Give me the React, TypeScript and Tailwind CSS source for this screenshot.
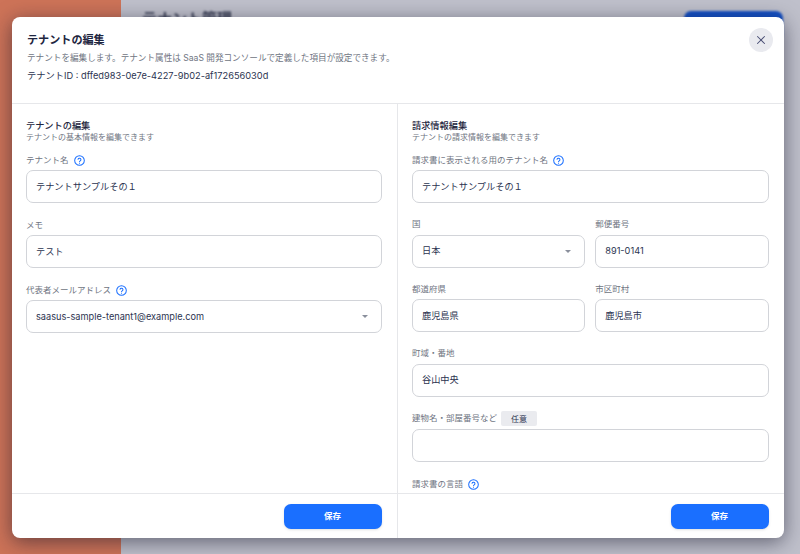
import { X } from 'lucide-react';
import type { ReactNode } from 'react';

const fontStack = '[font-family:Inter,"Noto_Sans_CJK_JP",sans-serif]';

function HelpIcon() {
  return (
    <svg width="11" height="11" viewBox="0 0 24 24" fill="none" stroke="#1a6fff" strokeWidth="2.2" strokeLinecap="round" strokeLinejoin="round">
      <circle cx="12" cy="12" r="10.5" />
      <path d="M8.8 9.2a3.3 3.3 0 0 1 6.4 1c0 2.2-3.2 2.6-3.2 4.6" />
      <path d="M12 18.2h.01" />
    </svg>
  );
}

function Label({ text, help, children }: { text: string; help?: boolean; children?: ReactNode }) {
  return (
    <div className="flex min-h-[14px] items-center gap-[5px] text-[8.5px] leading-none text-[#6f7582]">
      <span>{text}</span>
      {help && <HelpIcon />}
      {children}
    </div>
  );
}

function Field({ label, value, help, select, className, children }: {
  label: string;
  value?: string;
  help?: boolean;
  select?: boolean;
  className?: string;
  children?: ReactNode;
}) {
  return (
    <div className={className}>
      <Label text={label} help={help}>{children}</Label>
      <div className="mt-[3px] flex h-[33px] items-center justify-between rounded-[7px] border border-[#d2d4d9] pl-[9px] pr-[13px] text-[9.2px] text-[#2b3350]">
        <span>{value}</span>
        {select && <span className="h-0 w-0 border-x-[3px] border-t-[3px] border-x-transparent border-t-[#8a8f9c]" />}
      </div>
    </div>
  );
}

function PanelHead({ title, sub }: { title: string; sub: string }) {
  return (
    <div className="mb-[10px]">
      <div className="text-[9.2px] font-medium leading-[13px] text-[#1e2640]">{title}</div>
      <div className="text-[8px] leading-[11px] text-[#6f7582]">{sub}</div>
    </div>
  );
}

function Footer() {
  return (
    <div className="flex h-[45px] shrink-0 items-start justify-end border-t border-[#e6e7ea] pr-[15.5px] pt-[10px]">
      <button className="h-[25px] w-[98px] rounded-[7px] bg-[#1a6fff] text-[8.5px] font-bold text-white shadow-sm">保存</button>
    </div>
  );
}

export default function App() {
  return (
    <div className={`relative flex h-[554px] w-[800px] overflow-hidden bg-[#bfc0cb] ${fontStack}`}>
      {/* blurred page behind the dialog */}
      <div className="h-full w-[121px] shrink-0 bg-[#cd7358]" />
      <div className="flex h-[40px] flex-1 items-start justify-between pl-[21px] pr-[17px] pt-[11px] blur-[1px]">
        <span className="text-[15px] font-bold leading-[16px] text-[#3a3f55]">テナント管理</span>
        <span className="h-[30px] w-[99px] rounded-[7px] bg-[#1450c4]" />
      </div>

      <div className="absolute left-[12px] top-[17px] flex h-[521px] w-[772px] flex-col overflow-hidden rounded-[8px] bg-white shadow-[0_4px_20px_rgba(20,20,40,0.55)]">
        <div className="relative h-[87px] shrink-0 border-b border-[#e6e7ea] px-[15px] pt-[16px]">
          <div className="text-[11.1px] font-bold leading-[15px] text-[#1e2640]">テナントの編集</div>
          <div className="mt-[3px] text-[8.6px] leading-[14px] text-[#6f7582]">テナントを編集します。テナント属性は SaaS 開発コンソールで定義した項目が設定できます。</div>
          <div className="mt-[4px] text-[9.25px] leading-[14px] text-[#2b3350]">テナントID : dffed983-0e7e-4227-9b02-af172656030d</div>
          <button className="absolute right-[11px] top-[11px] flex h-[24px] w-[24px] items-center justify-center rounded-full bg-[#e9eaef] text-[#4a4f75]">
            <X size={14} strokeWidth={1.8} />
          </button>
        </div>

        <div className="flex min-h-0 flex-1">
          <div className="flex w-[386px] flex-col border-r border-[#e6e7ea]">
            <div className="min-h-0 flex-1 overflow-hidden pl-[14px] pr-[15px] pt-[15px]">
              <PanelHead title="テナントの編集" sub="テナントの基本情報を編集できます" />
              <div className="flex flex-col gap-[15px]">
                <Field label="テナント名" help value="テナントサンプルその１" />
                <Field label="メモ" value="テスト" />
                <Field label="代表者メールアドレス" help select value="saasus-sample-tenant1@example.com" />
              </div>
            </div>
            <Footer />
          </div>

          <div className="flex flex-1 flex-col">
            <div className="min-h-0 flex-1 overflow-hidden pl-[14px] pr-[15.5px] pt-[15px]">
              <PanelHead title="請求情報編集" sub="テナントの請求情報を編集できます" />
              <div className="flex flex-col gap-[14.5px]">
                <Field label="請求書に表示される用のテナント名" help value="テナントサンプルその１" />
                <div className="grid grid-cols-2 gap-[10px]">
                  <Field label="国" select value="日本" />
                  <Field label="郵便番号" value="891-0141" />
                </div>
                <div className="grid grid-cols-2 gap-[10px]">
                  <Field label="都道府県" value="鹿児島県" />
                  <Field label="市区町村" value="鹿児島市" />
                </div>
                <Field label="町域・番地" value="谷山中央" />
                <Field label="建物名・部屋番号など">
                  <span className="-ml-[1px] flex h-[15px] w-[36px] items-center justify-center rounded-[2px] bg-[#eaebef] text-[8px] text-[#2b3350]">任意</span>
                </Field>
                <Field className="pt-[1px]" label="請求書の言語" help />
              </div>
            </div>
            <Footer />
          </div>
        </div>
      </div>
    </div>
  );
}
